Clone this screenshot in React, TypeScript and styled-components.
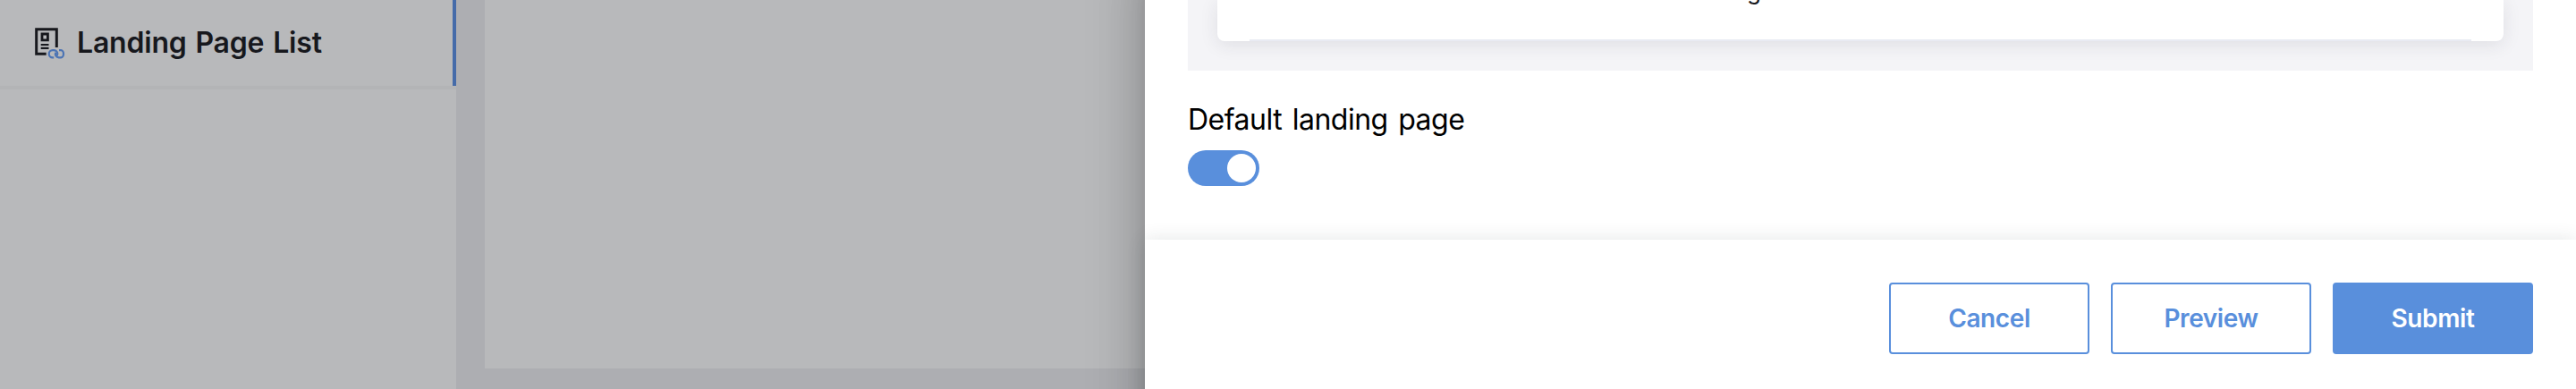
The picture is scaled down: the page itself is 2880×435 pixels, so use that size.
import React from "react";
import styled, { createGlobalStyle } from "styled-components";

const GlobalStyle = createGlobalStyle`
    body {
        margin: 0;
        overflow: hidden;
        font-family: Inter, "Liberation Sans", sans-serif;
    }
    * {
        box-sizing: border-box;
    }
`;

const Page = styled.div`
    display: flex;
    width: 2880px;
    height: 435px;
    overflow: hidden;
    background-color: #adaeb2;
`;

const Sidebar = styled.div`
    width: 510px;
    flex: none;
    background-color: #b8b9bb;
`;

const MenuItem = styled.div`
    display: flex;
    align-items: center;
    height: 96px;
    padding-left: 38px;
    border-right: 4px solid #456ba9;
    color: #17181d;
`;

const MenuLabel = styled.span`
    font-size: 32px;
    font-weight: 560;
    line-height: 44px;
    margin-left: 12px;
    white-space: nowrap;
    letter-spacing: -0.2px;
    word-spacing: 2px;
`;

const MenuDivider = styled.div`
    height: 4px;
    background-color: #b3b4b6;
`;

const Content = styled.div`
    width: 738px;
    height: 412px;
    flex: none;
    margin-left: 32px;
    background-color: #b8b9bb;
`;

const Drawer = styled.div`
    position: relative;
    display: flex;
    flex-direction: column;
    width: 1600px;
    /* runs past the bottom of the view so the shadow stays even */
    height: 560px;
    margin-top: -60px;
    padding-top: 60px;
    flex: none;
    background-color: white;
    box-shadow: 0 16px 20px -10px rgba(0, 0, 0, 0.2),
                0 32px 48px 4px rgba(0, 0, 0, 0.14),
                0 12px 60px 10px rgba(0, 0, 0, 0.12);
`;

const DrawerBody = styled.div`
    height: 268px;
    padding: 0 48px;
`;

const PreviewArea = styled.div`
    height: 79px;
    padding: 0 33px;
    background-color: #f4f4f7;
    overflow: hidden;
`;

const PreviewCard = styled.div`
    display: flex;
    flex-direction: column;
    justify-content: space-between;
    height: 46px;
    padding: 0 36px;
    background-color: white;
    border-radius: 0 0 8px 8px;
    box-shadow: 0 4px 20px rgba(40, 44, 60, 0.1);
`;

const CardText = styled.div`
    margin: -26px 0 0 556px;
    color: #17181d;
    font-size: 26px;
    line-height: 32px;
`;

const CardLine = styled.div`
    height: 2px;
    background-color: #e9ebf3;
`;

const FieldLabel = styled.div`
    margin-top: 33px;
    color: black;
    font-size: 32px;
    line-height: 44px;
    white-space: nowrap;
    letter-spacing: -0.5px;
    word-spacing: 3px;
`;

const Switch = styled.div`
    display: flex;
    justify-content: flex-end;
    width: 80px;
    height: 40px;
    margin-top: 12px;
    padding: 4px;
    border-radius: 20px;
    background-color: #598fdc;
`;

const Knob = styled.div`
    width: 32px;
    height: 32px;
    border-radius: 50%;
    background-color: white;
`;

const Footer = styled.div`
    display: flex;
    justify-content: flex-end;
    gap: 24px;
    height: 232px;
    padding: 48px 48px 0;
    background-color: white;
    box-shadow: 0 0 20px rgba(30, 50, 50, 0.12);
`;

const Button = styled.button<{ $primary?: boolean }>`
    width: 224px;
    height: 80px;
    padding: 0;
    border: 2px solid #598fdc;
    border-radius: 4px;
    background-color: ${({ $primary }) => ($primary ? '#598fdc' : 'white')};
    color: ${({ $primary }) => ($primary ? 'white' : '#598fdc')};
    font-family: inherit;
    font-size: 28px;
    font-weight: 600;
    letter-spacing: -0.4px;
`;

const PageIcon = () => (
    <svg width="36" height="36" viewBox="0 0 36 36" fill="none">
        <path d="M13.7 30.2H2.7V2.7H25.3V23" stroke="#17181d" strokeWidth="3" />
        <path d="M9 8H15.4V14.8H9z" stroke="#17181d" strokeWidth="2.8" />
        <path d="M7.7 20h8.8M7.7 23.8h8.8" stroke="#17181d" strokeWidth="2.2" />
        {/* two chain links, each open where the other one passes */}
        <path
            d="M22.2 34.4H20.8A4.1 4.1 0 0 1 20.8 26.2H22.5A4.1 4.1 0 0 1 25.8 32.3"
            stroke="#4c74b4"
            strokeWidth="2.2"
        />
        <path
            d="M28 26.2H30.2A2.8 4.1 0 0 1 33 30.3A2.8 4.1 0 0 1 30.2 34.4H27.8A4.1 4.1 0 0 1 24.3 28.6"
            stroke="#4c74b4"
            strokeWidth="2.2"
        />
    </svg>
);

const App: React.FC<{}> = () => {
    return (
        <>
            <GlobalStyle />
            <Page>
                <Sidebar>
                    <MenuItem>
                        <PageIcon />
                        <MenuLabel>Landing Page List</MenuLabel>
                    </MenuItem>
                    <MenuDivider />
                </Sidebar>
                <Content />
                <Drawer>
                    <DrawerBody>
                        <PreviewArea>
                            <PreviewCard>
                                <CardText>g</CardText>
                                <CardLine />
                            </PreviewCard>
                        </PreviewArea>
                        <FieldLabel>Default landing page</FieldLabel>
                        <Switch>
                            <Knob />
                        </Switch>
                    </DrawerBody>
                    <Footer>
                        <Button>Cancel</Button>
                        <Button>Preview</Button>
                        <Button $primary>Submit</Button>
                    </Footer>
                </Drawer>
            </Page>
        </>
    );
};

export default App;
